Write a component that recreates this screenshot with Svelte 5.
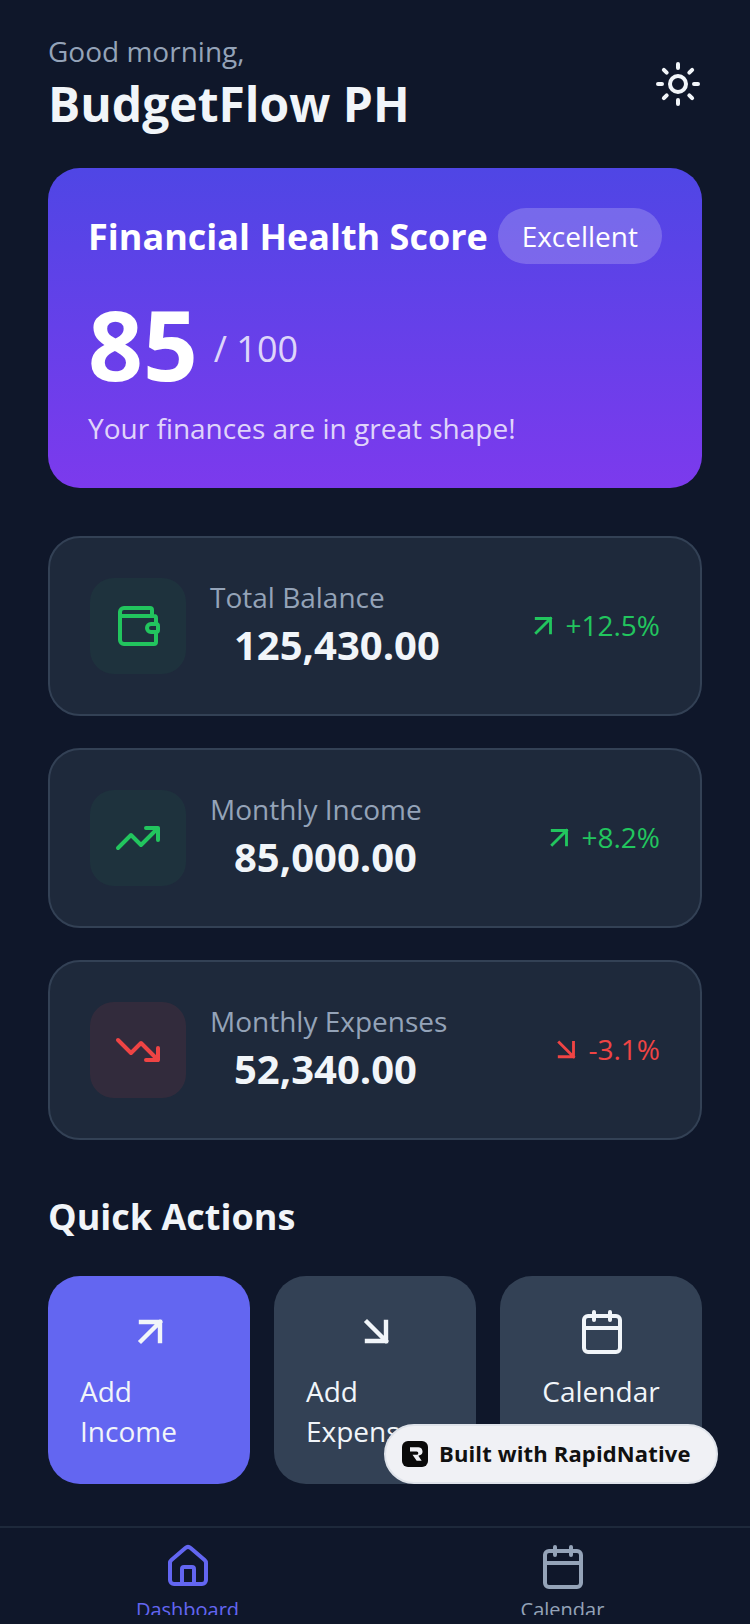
<script>
  const stats = [
    { label: 'Total Balance', amount: '125,430.00', change: '+12.5%', tone: 'up', icon: 'wallet' },
    { label: 'Monthly Income', amount: '85,000.00', change: '+8.2%', tone: 'up', icon: 'rise' },
    { label: 'Monthly Expenses', amount: '52,340.00', change: '-3.1%', tone: 'down', icon: 'fall' }
  ];

  const actions = [
    { label: 'Add Income', icon: 'up', primary: true },
    { label: 'Add Expense', icon: 'down', primary: false },
    { label: 'Calendar', icon: 'calendar', primary: false }
  ];
</script>

{#snippet arrowUp()}
  <path class="arrow" d="M7.500 7h9.500v9.500M7.500 16.500 17 7" />
{/snippet}

{#snippet arrowDown()}
  <path class="arrow" d="M7.500 7 17 16.500M17 7v9.500H7.500" />
{/snippet}

{#snippet calendar()}
  <rect x="3" y="4" width="18" height="18" rx="2" />
  <path d="M8 2v4M16 2v4M3 10h18" />
{/snippet}

<div class="screen">
  <main>
    <header>
      <div>
        <p class="greeting">Good morning,</p>
        <h1>BudgetFlow PH</h1>
      </div>
      <svg class="sun" viewBox="0 0 24 24" aria-hidden="true">
        <circle cx="12" cy="12" r="4" />
        <path d="M12 2v2M12 20v2M4.930 4.930l1.410 1.410M17.660 17.660l1.410 1.410M2 12h2M20 12h2M6.340 17.660l-1.410 1.410M19.070 4.930l-1.410 1.410" />
      </svg>
    </header>

    <section class="hero">
      <div class="hero-top">
        <h2>Financial Health Score</h2>
        <span class="badge">Excellent</span>
      </div>
      <div class="score">
        <span class="score-value">85</span>
        <span class="score-max">/ 100</span>
      </div>
      <p class="hero-note">Your finances are in great shape!</p>
    </section>

    <section class="stats">
      {#each stats as stat}
        <article class="stat">
          <div class="stat-icon {stat.tone}">
            <svg viewBox="0 0 24 24" aria-hidden="true">
              {#if stat.icon === 'wallet'}
                <path d="M19 7V4a1 1 0 0 0-1-1H5a2 2 0 0 0-2 2v14a2 2 0 0 0 2 2h15a1 1 0 0 0 1-1v-4M3 7h17a1 1 0 0 1 1 1v3" />
                <path d="M21 11h-2.500a2 2 0 0 0 0 4H21a1 1 0 0 0 1-1v-2a1 1 0 0 0-1-1z" />
              {:else if stat.icon === 'rise'}
                <path d="M22 7l-8.500 8.500-5-5L2 17M16 7h6v6" />
              {:else}
                <path d="M22 17l-8.500-8.500-5 5L2 7M16 17h6v-6" />
              {/if}
            </svg>
          </div>
          <div class="stat-text">
            <span class="stat-label">{stat.label}</span>
            <span class="stat-amount">{stat.amount}</span>
          </div>
          <div class="stat-change {stat.tone}">
            <svg viewBox="0 0 24 24" aria-hidden="true">
              {#if stat.tone === 'up'}
                {@render arrowUp()}
              {:else}
                {@render arrowDown()}
              {/if}
            </svg>
            <span>{stat.change}</span>
          </div>
        </article>
      {/each}
    </section>

    <section class="quick">
      <h3>Quick Actions</h3>
      <div class="actions">
        {#each actions as action}
          <div class="action" class:primary={action.primary}>
            <svg viewBox="0 0 24 24" aria-hidden="true">
              {#if action.icon === 'up'}
                {@render arrowUp()}
              {:else if action.icon === 'down'}
                {@render arrowDown()}
              {:else}
                {@render calendar()}
              {/if}
            </svg>
            <span>{action.label}</span>
          </div>
        {/each}
      </div>
    </section>
  </main>

  <nav>
    <div class="tab active">
      <svg viewBox="0 0 24 24" aria-hidden="true">
        <path d="M3 10a2 2 0 0 1 .7-1.500l7-6a2 2 0 0 1 2.600 0l7 6A2 2 0 0 1 21 10v8.500a2 2 0 0 1-2 2H5a2 2 0 0 1-2-2z" />
        <path d="M9 20.500V13a1 1 0 0 1 1-1h4a1 1 0 0 1 1 1v7.500" />
      </svg>
      <span>Dashboard</span>
    </div>
    <div class="tab">
      <svg viewBox="0 0 24 24" aria-hidden="true">{@render calendar()}</svg>
      <span>Calendar</span>
    </div>
  </nav>

  <div class="built">
    <span class="built-logo">
      <svg viewBox="0 0 24 24" aria-hidden="true">
        <path d="M6 4h10a5 5 0 0 1 3 9l-3 1 4 6h-6l-5-7h5a2 2 0 0 0 0-4H6z" />
      </svg>
    </span>
    <span class="built-text">Built with RapidNative</span>
  </div>
</div>

<style>
  :global(body) {
    background: #0f172a;
  }

  .screen {
    position: relative;
    width: 750px;
    height: 1624px;
    overflow: hidden;
    display: flex;
    flex-direction: column;
    background: #0f172a;
    font-family: 'Open Sans', sans-serif;
    color: #f1f5f9;
  }

  main {
    flex: 1;
    min-height: 0;
    padding: 32px 48px 0;
  }

  svg {
    display: block;
    fill: none;
    stroke: currentColor;
    stroke-width: 2;
    stroke-linecap: round;
    stroke-linejoin: round;
  }

  .arrow {
    stroke-width: 2.200;
    stroke-linecap: square;
    stroke-linejoin: miter;
  }

  header {
    display: flex;
    justify-content: space-between;
    align-items: center;
    height: 104px;
  }

  .greeting {
    margin: 0 0 2px;
    font-size: 28px;
    line-height: 38px;
    color: #94a3b8;
  }

  h1 {
    margin: 0;
    font-size: 48px;
    line-height: 64px;
    font-weight: 700;
  }

  .sun {
    width: 48px;
    height: 48px;
    color: #f1f5f9;
  }

  .hero {
    margin-top: 32px;
    height: 320px;
    box-sizing: border-box;
    padding: 40px;
    border-radius: 32px;
    background: linear-gradient(180deg, #4f46e5, #7c3aed);
    color: #fff;
  }

  .hero-top {
    display: flex;
    justify-content: space-between;
    align-items: center;
  }

  h2 {
    margin: 0;
    padding-top: 2px;
    font-size: 36px;
    line-height: 54px;
    font-weight: 700;
    white-space: nowrap;
  }

  .badge {
    padding: 0 24px;
    height: 56px;
    line-height: 56px;
    border-radius: 28px;
    background: rgba(255, 255, 255, 0.2);
    font-size: 28px;
  }

  .score {
    display: flex;
    align-items: center;
    gap: 16px;
    margin-top: 24px;
    height: 112px;
  }

  .score-value {
    font-size: 96px;
    line-height: 112px;
    font-weight: 700;
  }

  .score-max {
    padding-top: 8px;
    font-size: 36px;
    color: rgba(255, 255, 255, 0.8);
  }

  .hero-note {
    margin: 8px 0 0;
    font-size: 28px;
    line-height: 40px;
    color: rgba(255, 255, 255, 0.8);
  }

  .stats {
    display: flex;
    flex-direction: column;
    gap: 32px;
    margin-top: 48px;
  }

  .stat {
    display: flex;
    align-items: center;
    height: 180px;
    box-sizing: border-box;
    padding: 0 40px;
    border: 2px solid #334155;
    border-radius: 32px;
    background: #1e293b;
  }

  .stat-icon {
    display: flex;
    align-items: center;
    justify-content: center;
    flex: none;
    width: 96px;
    height: 96px;
    border-radius: 24px;
  }

  .stat-icon svg {
    width: 48px;
    height: 48px;
  }

  .stat-icon.up {
    background: rgba(34, 197, 94, 0.063);
    color: #22c55e;
  }

  .stat-icon.down {
    background: rgba(239, 68, 68, 0.1);
    color: #ef4444;
  }

  .stat-text {
    flex: 1;
    display: flex;
    flex-direction: column;
    margin-left: 24px;
    padding-bottom: 2px;
  }

  .stat-label {
    font-size: 28px;
    line-height: 40px;
    color: #94a3b8;
  }

  .stat-amount {
    padding-left: 24px;
    font-size: 40px;
    line-height: 56px;
    font-weight: 700;
  }

  .stat-change {
    display: flex;
    align-items: center;
    gap: 4px;
    font-size: 28px;
  }

  .stat-change span {
    padding-bottom: 2px;
  }

  .stat-change svg {
    width: 36px;
    height: 36px;
  }

  .stat-change .arrow {
    stroke-width: 1.900;
  }

  .stat-change.up {
    color: #22c55e;
  }

  .stat-change.down {
    color: #ef4444;
  }

  .quick {
    margin-top: 48px;
  }

  h3 {
    margin: 0;
    padding-top: 2px;
    font-size: 36px;
    line-height: 54px;
    font-weight: 700;
  }

  .actions {
    display: grid;
    grid-template-columns: repeat(3, 1fr);
    gap: 24px;
    margin-top: 32px;
  }

  .action {
    display: flex;
    flex-direction: column;
    align-items: center;
    height: 208px;
    box-sizing: border-box;
    padding: 32px;
    border-radius: 32px;
    background: #334155;
    font-size: 28px;
    line-height: 40px;
  }

  .action.primary {
    background: #6366f1;
  }

  .action svg {
    width: 48px;
    height: 48px;
    margin-bottom: 15px;
    margin-left: 2px;
    flex: none;
  }

  nav {
    flex: none;
    display: grid;
    grid-template-columns: 1fr 1fr;
    height: 89px;
    margin-bottom: 9px;
    box-sizing: border-box;
    padding-top: 15px;
    border-top: 2px solid #1e293b;
    overflow: hidden;
  }

  .tab {
    display: flex;
    flex-direction: column;
    align-items: center;
    color: #94a3b8;
    font-size: 20px;
    line-height: 32px;
  }

  .tab span {
    margin-top: 3px;
  }

  .tab.active {
    color: #6366f1;
  }

  .tab svg {
    width: 48px;
    height: 48px;
  }

  .built {
    position: absolute;
    left: 384px;
    top: 1424px;
    display: flex;
    align-items: center;
    gap: 11px;
    width: 334px;
    height: 60px;
    box-sizing: border-box;
    padding-left: 16px;
    border: 2px solid #dfe3ea;
    border-radius: 30px;
    background: #f0f1f5;
    color: #111;
    font-size: 22px;
    font-weight: 700;
  }

  .built-text {
    padding-bottom: 2px;
    letter-spacing: 0.14px;
  }

  .built-logo {
    display: flex;
    align-items: center;
    justify-content: center;
    width: 26px;
    height: 26px;
    border-radius: 6px;
    background: #0a0a0a;
  }

  .built-logo svg {
    width: 20px;
    height: 20px;
    fill: #f0f1f5;
    stroke: none;
  }
</style>
